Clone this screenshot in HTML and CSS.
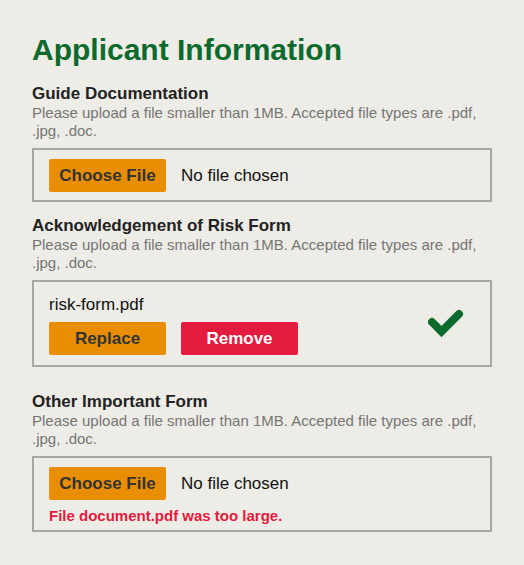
FILE: index.html
```html
<!DOCTYPE html>
<html lang="en">
<head>
<meta charset="utf-8">
<title>Applicant Information</title>
<link rel="stylesheet" href="styles.css">
</head>
<body>
<main class="page">
  <h1 class="title">Applicant Information</h1>

  <section class="field">
    <h2 class="field-label">Guide Documentation</h2>
    <p class="hint">Please upload a file smaller than 1MB. Accepted file types are .pdf, .jpg, .doc.</p>
    <div class="upload-box upload-box--empty">
      <span class="btn btn--primary">Choose File</span>
      <span class="file-status">No file chosen</span>
    </div>
  </section>

  <section class="field field--done">
    <h2 class="field-label">Acknowledgement of Risk Form</h2>
    <p class="hint">Please upload a file smaller than 1MB. Accepted file types are .pdf, .jpg, .doc.</p>
    <div class="upload-box upload-box--filled">
      <div class="file-info">
        <div class="file-name">risk-form.pdf</div>
        <div class="actions">
          <span class="btn btn--primary">Replace</span>
          <span class="btn btn--danger">Remove</span>
        </div>
      </div>
      <svg class="check" width="36" height="30" viewBox="0 0 36 30" aria-hidden="true">
        <polyline points="4,12 13.5,21.5 31,4" fill="none" stroke="#0b6a2c" stroke-width="8" stroke-linecap="round" stroke-linejoin="miter"/>
      </svg>
    </div>
  </section>

  <section class="field">
    <h2 class="field-label">Other Important Form</h2>
    <p class="hint">Please upload a file smaller than 1MB. Accepted file types are .pdf, .jpg, .doc.</p>
    <div class="upload-box upload-box--error">
      <div class="row">
        <span class="btn btn--primary">Choose File</span>
        <span class="file-status">No file chosen</span>
      </div>
      <p class="error">File document.pdf was too large.</p>
    </div>
  </section>
</main>
</body>
</html>
```

FILE: styles.css
```css
* {
  box-sizing: border-box;
}

body {
  margin: 0;
  background: #eeece6;
  font-family: "Liberation Sans", Arial, sans-serif;
  color: #222222;
}

.page {
  padding: 33px 32px 0 32px;
}

.title {
  margin: 0;
  font-size: 30px;
  line-height: 34px;
  font-weight: bold;
  color: #0b6a2c;
}

.field {
  margin-top: 14px;
}

.title + .field {
  margin-top: 17px;
}

.field--done {
  margin-bottom: 25px;
}

.field--done + .field {
  margin-top: 0;
}

.field-label {
  margin: 0;
  font-size: 17px;
  line-height: 20px;
  font-weight: bold;
  color: #222222;
}

.hint {
  margin: 0 0 9px 0;
  font-size: 15px;
  line-height: 17.5px;
  color: #757575;
}

.upload-box {
  border: 2px solid #a7a7a5;
}

.upload-box--empty {
  display: flex;
  align-items: center;
  gap: 15px;
  padding: 9px 15px 8px 15px;
}

.upload-box--filled {
  display: flex;
  align-items: center;
  justify-content: space-between;
  padding: 13px 26px 10px 15px;
}

.upload-box--error {
  padding: 9px 15px 5px 15px;
}

.row {
  display: flex;
  align-items: center;
  gap: 15px;
}

.btn {
  display: inline-flex;
  align-items: center;
  justify-content: center;
  width: 117px;
  height: 33px;
  border-radius: 2px;
  font-size: 17px;
  font-weight: bold;
}

.btn--primary {
  background: #e98e00;
  color: #333333;
}

.btn--danger {
  background: #e31b3e;
  color: #ffffff;
}

.file-status {
  font-size: 17px;
  color: #111111;
}

.file-name {
  font-size: 17px;
  line-height: 20px;
  color: #111111;
  margin-bottom: 7px;
}

.actions {
  display: flex;
  gap: 15px;
}

.check {
  display: block;
}

.error {
  margin: 7px 0 0 0;
  font-size: 15px;
  line-height: 18px;
  font-weight: bold;
  color: #e31b3e;
}
```
